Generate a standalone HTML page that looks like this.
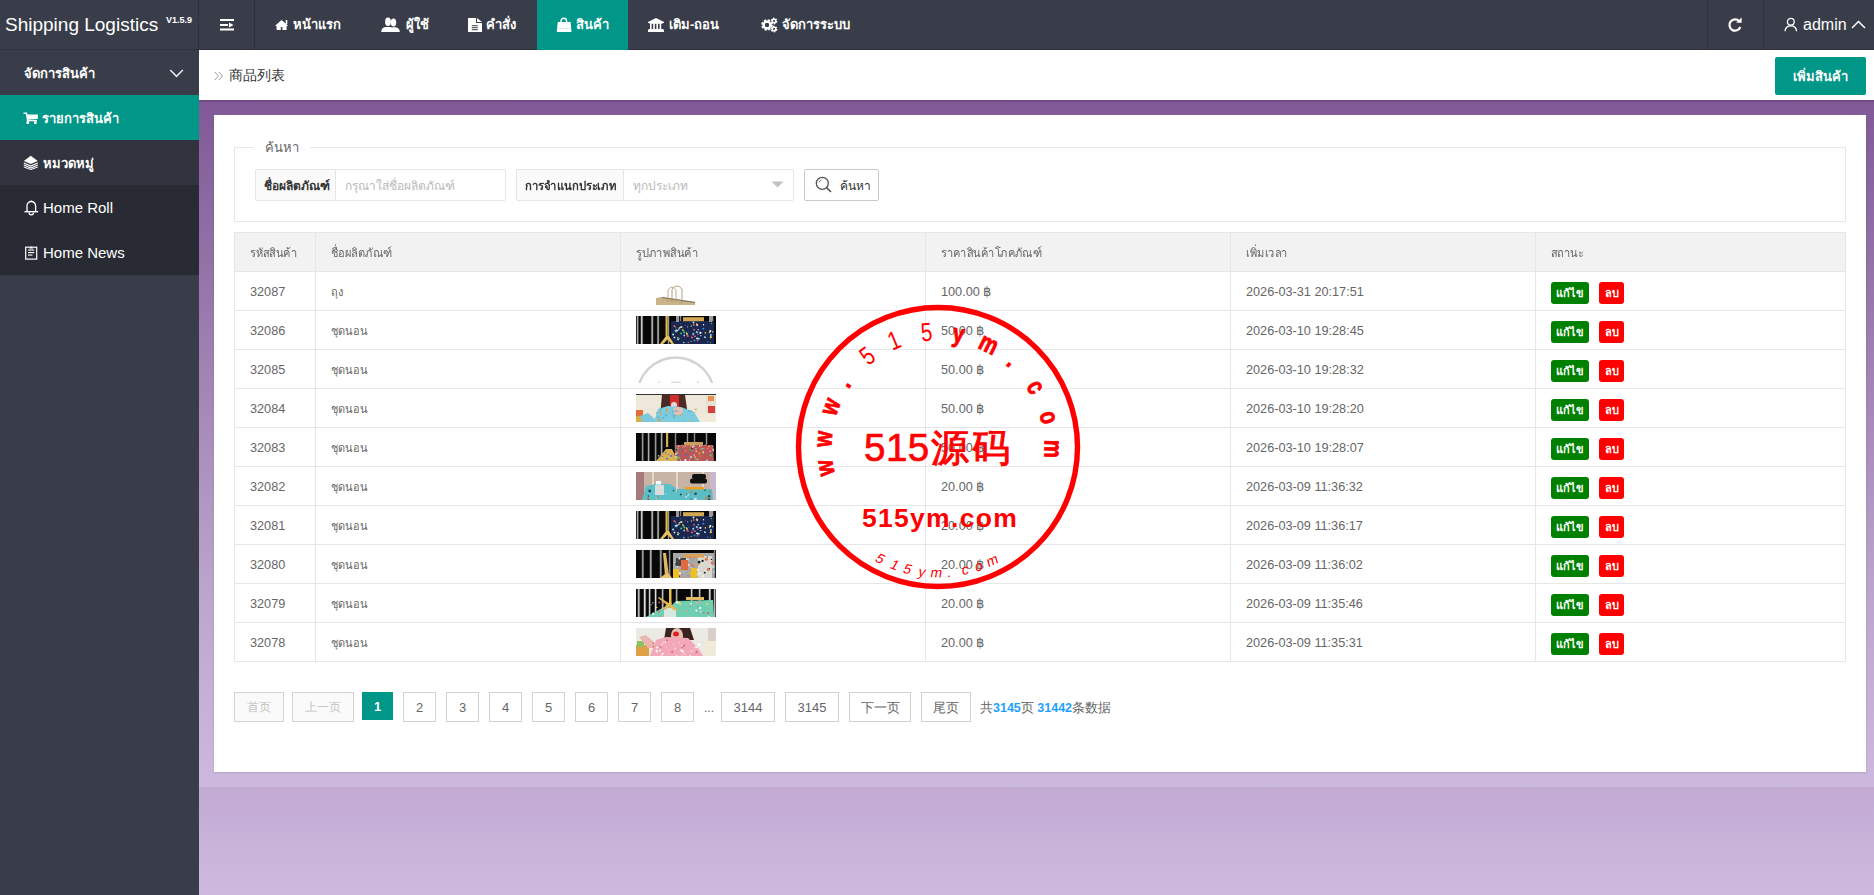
<!DOCTYPE html>
<html><head><meta charset="utf-8">
<style>
*{margin:0;padding:0;box-sizing:border-box}
html,body{width:1874px;height:895px;overflow:hidden}
body{font-family:"Liberation Sans",sans-serif;font-size:14px;color:#666;position:relative;
background:linear-gradient(180deg,#b89fca 0px,#c2aad2 787px,#cfbadf 895px)}
.abs{position:absolute}
#header{left:0;top:0;width:1874px;height:50px;background:#393D49}
#logo{left:0;top:0;width:198px;height:50px;color:#fff;white-space:nowrap}
#logo sup{font-size:10px;font-weight:bold;position:relative;top:-2px}
.vline{position:absolute;top:0;width:1px;height:50px;background:#2f323c}
.nav{position:absolute;top:0;height:50px;line-height:50px;color:#fff;font-weight:bold;font-size:13px;white-space:nowrap}
.nav svg{position:absolute}
#side{left:0;top:50px;width:199px;height:845px;background:#393D49}
.sitem{position:absolute;left:0;width:199px;height:45px;line-height:45px;color:#fff;white-space:nowrap;font-size:13px}
#crumb{left:199px;top:50px;width:1675px;height:50px;background:#fff}
#wrap{left:199px;top:100px;width:1675px;height:687px;background:linear-gradient(180deg,rgb(128,89,150) 0%,rgb(152,120,172) 29%,rgb(189,166,206) 73%,rgb(204,185,221) 100%)}
#wrap:before{content:"";position:absolute;left:0;top:0;right:0;height:3px;background:linear-gradient(180deg,rgba(60,20,70,.35),rgba(60,20,70,0))}
#card{left:214px;top:115px;width:1652px;height:657px;background:#fff;box-shadow:0 1px 2px 0 rgba(0,0,0,.12)}
table{border-collapse:collapse;table-layout:fixed;position:absolute;left:234px;top:232px;width:1612px}
td,th{border:1px solid #e6e6e6;height:39px;padding:0 15px;text-align:left;font-weight:normal;color:#666;font-size:12.7px;white-space:nowrap;line-height:20px;vertical-align:middle}
th{font-size:12px;padding-top:2px}
.sx{display:inline-block;transform:scaleX(.925);transform-origin:0 50%}
td{padding-top:2px}
.btn{position:relative;top:1px}
td.th{font-size:11px}

td.im{padding-top:0}
td.im svg{filter:blur(0.35px)}
.btn.g{background:#008000}.btn.r{background:#f00;margin-left:10px;padding:0 5px 0 6px}
th{background:#f2f2f2}
.btn{display:inline-block;height:22px;line-height:23px;padding:0 5px;color:#fff;font-size:11px;font-weight:bold;border-radius:3px;vertical-align:middle}
.pg{position:absolute;top:692px;height:30px;line-height:29px;border:1px solid #d2d2d2;text-align:center;color:#666;font-size:13px;background:#fff}
.pg.dis{background:#fafafa;color:#c2c2c2;font-size:12px}
.pg.cur{background:#009688;border-color:#009688;color:#fff;font-weight:bold;height:28px;line-height:27px}
.bl{color:#1E9FFF;font-weight:bold}
</style></head><body>
<div id="header" class="abs"></div>
<div id="logo" class="abs"><span id="lg1" style="position:absolute;left:5px;top:0;font-size:19px;line-height:50px">Shipping Logistics</span><span id="lg2" style="position:absolute;left:166px;top:0;font-size:9px;font-weight:bold;line-height:40px">V1.5.9</span></div>
<div class="abs" style="left:0;top:49px;width:1874px;height:1px;background:#30333d"></div>
<div class="vline" style="left:198px"></div>
<div class="vline" style="left:254px"></div>
<div class="vline" style="left:1707px"></div>
<div class="vline" style="left:1763px"></div>
<!-- hamburger -->
<svg class="abs" style="left:220px;top:18px" width="15" height="14" viewBox="0 0 15 14"><rect x="0" y="1" width="14" height="2" fill="#fff"/><rect x="0" y="6" width="8" height="2" fill="#fff"/><path d="M9 4.5 L13.5 7 L9 9.5Z" fill="#fff"/><rect x="0" y="10.5" width="14" height="2" fill="#fff"/></svg>
<!-- house -->
<svg class="abs" style="left:275px;top:19px" width="14" height="12" viewBox="0 0 14 12"><path d="M0.3 6.6 L6.6 1 L12.9 6.6 L12 7.3 L11.6 7 L11.6 11 L7.4 11 L7.4 8 L5.8 8 L5.8 11 L1.6 11 L1.6 7 L1.2 7.3Z" fill="#fff"/><rect x="10.7" y="1" width="1.6" height="4" fill="#fff"/></svg>
<div class="nav" style="left:293px">หน้าแรก</div>
<!-- users -->
<svg class="abs" style="left:381px;top:17px" width="20" height="16" viewBox="0 0 20 16"><ellipse cx="7" cy="4.8" rx="2.9" ry="4.3" fill="#fff"/><ellipse cx="12.5" cy="5.6" rx="2.7" ry="4" fill="#fff"/><path d="M0.2 15 Q0.4 10.5 4.5 10 L9.5 10 Q13 10.5 13.4 15Z" fill="#fff"/><path d="M11 10.3 L14.5 10.3 Q18.6 10.8 18.8 15 L12.8 15 Q12.6 12 11 10.3Z" fill="#fff"/></svg>
<div class="nav" style="left:406px">ผู้ใช้</div>
<!-- file -->
<svg class="abs" style="left:468px;top:17px" width="15" height="16" viewBox="0 0 15 16"><path d="M0 1 L8 1 L8 6 L14 6 L14 15 L0 15Z" fill="#fff"/><path d="M9 1 L14 5 L9 5Z" fill="#fff"/><rect x="3.8" y="8.2" width="6" height="1" fill="#393D49"/><rect x="3.8" y="10.2" width="6" height="1" fill="#393D49"/><rect x="3.8" y="12.2" width="6" height="1" fill="#393D49"/></svg>
<div class="nav" style="left:486px">คำสั่ง</div>
<!-- active tab -->
<div class="abs" style="left:537px;top:0;width:91px;height:50px;background:#009688"></div>
<svg class="abs" style="left:556px;top:17px" width="16" height="16" viewBox="0 0 16 16"><path d="M5 5.5 L5 4 A2.8 2.8 0 0 1 10.6 4 L10.6 5.5" stroke="#fff" stroke-width="1.4" fill="none"/><path d="M1.8 5 L14.6 5 L15.5 15 L0.7 15Z" fill="#fff"/><rect x="1" y="11.2" width="14.2" height="0.8" fill="#cfe9e6"/></svg>
<div class="nav" style="left:576px">สินค้า</div>
<!-- bank -->
<svg class="abs" style="left:648px;top:17px" width="17" height="16" viewBox="0 0 17 16"><path d="M0 5 L8 1 L16 5 L16 6 L0 6Z" fill="#fff"/><rect x="1.5" y="6" width="13" height="0.8" fill="#fff"/><rect x="2" y="6" width="1.6" height="6" fill="#fff"/><rect x="5.2" y="6" width="1.6" height="6" fill="#fff"/><rect x="8.4" y="6" width="1.6" height="6" fill="#fff"/><rect x="11.6" y="6" width="1.6" height="6" fill="#fff"/><path d="M1 12 L15 12 L16 13 L16 15 L0 15 L0 13Z" fill="#fff"/></svg>
<div class="nav" style="left:669px">เติม-ถอน</div>
<!-- gears -->
<svg class="abs" style="left:760px;top:17px" width="19" height="16" viewBox="0 0 19 16"><circle cx="7" cy="8" r="4.3" fill="none" stroke="#fff" stroke-width="3" stroke-dasharray="2 1.4"/><circle cx="7" cy="8" r="3.4" fill="none" stroke="#fff" stroke-width="2.4"/><circle cx="14" cy="4" r="2.4" fill="none" stroke="#fff" stroke-width="2" stroke-dasharray="1.3 1"/><circle cx="14" cy="4" r="1.8" fill="none" stroke="#fff" stroke-width="1.4"/><circle cx="14" cy="12" r="2.4" fill="none" stroke="#fff" stroke-width="2" stroke-dasharray="1.3 1"/><circle cx="14" cy="12" r="1.8" fill="none" stroke="#fff" stroke-width="1.4"/></svg>
<div class="nav" style="left:782px">จัดการระบบ</div>
<!-- refresh -->
<svg class="abs" style="left:1727px;top:17px" width="16" height="16" viewBox="0 0 16 16"><path d="M12.2 4.3 A5.6 5.6 0 1 0 13.3 10" stroke="#fff" stroke-width="2.2" fill="none"/><path d="M9.2 5.8 L14.6 5.8 L14.6 0.6Z" fill="#fff"/></svg>
<!-- user -->
<svg class="abs" style="left:1784px;top:17px" width="14" height="15" viewBox="0 0 14 15"><circle cx="6.8" cy="4.8" r="3.4" stroke="#fff" stroke-width="1.3" fill="none"/><path d="M1 14.2 Q1.5 8.8 6.8 8.8 Q12.1 8.8 12.6 14.2" stroke="#fff" stroke-width="1.3" fill="none"/></svg>
<div class="nav" style="left:1803px;font-weight:normal;font-size:16px">admin</div>
<svg class="abs" style="left:1851px;top:20px" width="16" height="10" viewBox="0 0 16 10"><path d="M1 8 L7.5 1.5 L14 8" stroke="#fff" stroke-width="1.5" fill="none"/></svg>


<div id="side" class="abs"></div>
<div class="sitem" style="top:50px;background:#393D49;padding-left:24px;font-weight:bold;line-height:47px">จัดการสินค้า</div>
<div class="sitem" style="top:95px;background:#009688;padding-left:42px;font-weight:bold;line-height:47px">รายการสินค้า</div>
<div class="sitem" style="top:140px;background:#31343e;padding-left:43px;font-weight:bold;line-height:47px">หมวดหมู่</div>
<div class="sitem" style="top:185px;background:#282B33;padding-left:43px;font-size:15px">Home Roll</div>
<div class="sitem" style="top:230px;background:#282B33;padding-left:43px;font-size:15px">Home News</div>

<div id="crumb" class="abs"></div>
<svg class="abs" style="left:214px;top:71px" width="10" height="10" viewBox="0 0 10 10"><path d="M0.8 1 L4.5 5 L0.8 9 M4.8 1 L8.5 5 L4.8 9" stroke="#999" stroke-width="1" fill="none"/></svg>
<div class="abs" id="crumbtxt" style="left:229px;top:50px;line-height:50px;font-size:14px;color:#333">商品列表</div>
<div class="abs" style="left:1775px;top:57px;width:91px;height:38px;background:#009688;border-radius:2px;color:#fff;font-weight:bold;font-size:13px;line-height:40px;text-align:center">เพิ่มสินค้า</div>

<div id="wrap" class="abs"></div>
<div id="card" class="abs"></div>
<div class="abs" style="left:234px;top:147px;width:1612px;height:75px;border:1px solid #e6e6e6"></div>
<div class="abs" style="left:254px;top:137px;padding:0 11px;background:#fff;line-height:22px;font-size:13px;color:#666">ค้นหา</div>
<div class="abs" style="left:255px;top:169px;width:251px;height:32px;border:1px solid #e6e6e6;border-radius:2px;background:#fff"></div>
<div class="abs" style="left:256px;top:170px;width:80px;height:30px;background:#fafafa;border-right:1px solid #e6e6e6"></div>
<div class="abs" style="left:264px;top:170px;line-height:33px;font-size:12px;font-weight:bold;color:#333">ชื่อผลิตภัณฑ์</div>
<div class="abs" style="left:345px;top:170px;line-height:33px;font-size:12px;color:#bbb">กรุณาใส่ชื่อผลิตภัณฑ์</div>
<div class="abs" style="left:516px;top:169px;width:278px;height:32px;border:1px solid #e6e6e6;border-radius:2px;background:#fff"></div>
<div class="abs" style="left:517px;top:170px;width:107px;height:30px;background:#fafafa;border-right:1px solid #e6e6e6"></div>
<div class="abs" style="left:525px;top:170px;line-height:33px;font-size:12px;font-weight:bold;color:#333;transform:scaleX(.94);transform-origin:0 50%">การจำแนกประเภท</div>
<div class="abs" style="left:633px;top:170px;line-height:33px;font-size:12px;color:#bbb">ทุกประเภท</div>
<svg class="abs" style="left:771px;top:181px" width="13" height="7" viewBox="0 0 13 7"><path d="M0.5 0.5 L12.5 0.5 L6.5 6.5Z" fill="#c2c2c2"/></svg>
<div class="abs" style="left:804px;top:169px;width:75px;height:32px;border:1px solid #c9c9c9;border-radius:2px;background:#fff"></div>
<svg class="abs" style="left:815px;top:176px" width="18" height="18" viewBox="0 0 18 18"><circle cx="7.3" cy="7.3" r="6" stroke="#555" stroke-width="1.3" fill="none"/><path d="M11.6 11.6 L16 16" stroke="#555" stroke-width="1.6"/><path d="M4 6.5 A3.5 3.5 0 0 1 6.5 4" stroke="#777" stroke-width="1" fill="none"/></svg>
<div class="abs" style="left:840px;top:170px;line-height:33px;font-size:12px;color:#333">ค้นหา</div>


<table>
<colgroup><col style="width:81px"><col style="width:305px"><col style="width:305px"><col style="width:305px"><col style="width:305px"><col style="width:310px"></colgroup>
<tr><th><span class="sx">รหัสสินค้า</span></th><th><span class="sx">ชื่อผลิตภัณฑ์</span></th><th><span class="sx">รูปภาพสินค้า</span></th><th><span class="sx">ราคาสินค้าโภคภัณฑ์</span></th><th><span class="sx">เพิ่มเวลา</span></th><th><span class="sx">สถานะ</span></th></tr>
<tr><td>32087</td><td class="th">ถุง</td><td class="im"><svg width="80" height="28" viewBox="0 0 80 28" style="display:block"><rect width="80" height="28" fill="#fff"/><path d="M20 21 L26 20 L59 25 L59 28 L20 28Z" fill="#c9b48a"/><path d="M26 20 L59 25 L59 26 L26 21Z" fill="#7d6a4c"/><path d="M32 25 L32 13 Q36 7 40 13 L40 25" stroke="#b09870" stroke-width="0.8" fill="none"/><path d="M36 25 L36 12 Q41 6 46 12 L46 26" stroke="#a08a64" stroke-width="0.8" fill="none"/></svg></td><td>100.00 ฿</td><td>2026-03-31 20:17:51</td><td class="ac"><span class="btn g">แก้ไข</span><span class="btn r">ลบ</span></td></tr>
<tr><td>32086</td><td class="th">ชุดนอน</td><td class="im"><svg width="80" height="28" viewBox="0 0 80 28" style="display:block"><rect width="80" height="28" fill="#080808"/><rect x="0.4" y="0" width="2.4" height="28" fill="#aaa" opacity="0.35"/><rect x="1" y="0" width="1.2" height="28" fill="#aaa"/><rect x="4.4" y="0" width="2.7" height="28" fill="#c8c8c8" opacity="0.35"/><rect x="5" y="0" width="1.5" height="28" fill="#c8c8c8"/><rect x="14.9" y="0" width="2.7" height="28" fill="#aaa" opacity="0.35"/><rect x="15.5" y="0" width="1.5" height="28" fill="#aaa"/><rect x="20.9" y="0" width="2.4" height="28" fill="#bbb" opacity="0.35"/><rect x="21.5" y="0" width="1.2" height="28" fill="#bbb"/><rect x="31.4" y="0" width="2.2" height="28" fill="#999" opacity="0.35"/><rect x="32" y="0" width="1" height="28" fill="#999"/><rect x="43.4" y="0" width="2.2" height="28" fill="#888" opacity="0.35"/><rect x="44" y="0" width="1" height="28" fill="#888"/><rect x="75.4" y="0" width="2.2" height="28" fill="#999" opacity="0.35"/><rect x="76" y="0" width="1" height="28" fill="#999"/><rect x="35" y="5" width="43" height="23" fill="#1a2850"/><circle cx="49.3" cy="9.2" r="0.5" fill="#e8506a"/><circle cx="58.0" cy="13.7" r="1.0" fill="#e8506a"/><circle cx="44.8" cy="7.8" r="0.5" fill="#3a7fd8"/><circle cx="39.7" cy="14.9" r="1.1" fill="#8fd0f0"/><circle cx="61.9" cy="18.2" r="0.8" fill="#e8506a"/><circle cx="52.3" cy="26.5" r="0.8" fill="#e8506a"/><circle cx="41.5" cy="14.8" r="0.8" fill="#8fd0f0"/><circle cx="59.0" cy="20.3" r="0.8" fill="#8fd0f0"/><circle cx="62.2" cy="13.8" r="0.8" fill="#8fd0f0"/><circle cx="61.4" cy="16.4" r="1.0" fill="#3a7fd8"/><circle cx="55.1" cy="25.4" r="0.7" fill="#60d060"/><circle cx="68.6" cy="20.7" r="0.5" fill="#fff"/><circle cx="48.3" cy="16.4" r="0.9" fill="#60d060"/><circle cx="47.8" cy="26.6" r="0.8" fill="#8fd0f0"/><circle cx="42.8" cy="13.2" r="0.8" fill="#c0e0f0"/><circle cx="75.4" cy="7.6" r="0.7" fill="#60d060"/><circle cx="50.4" cy="16.4" r="0.5" fill="#c0e0f0"/><circle cx="39.8" cy="11.7" r="0.5" fill="#8fd0f0"/><circle cx="64.8" cy="19.6" r="0.7" fill="#c0e0f0"/><circle cx="51.8" cy="20.0" r="1.1" fill="#e8506a"/><circle cx="50.6" cy="18.8" r="0.5" fill="#c0e0f0"/><circle cx="67.5" cy="8.7" r="0.7" fill="#fff"/><circle cx="73.6" cy="16.4" r="0.8" fill="#f0d040"/><circle cx="58.5" cy="24.6" r="1.0" fill="#3a7fd8"/><circle cx="47.4" cy="14.7" r="0.9" fill="#60d060"/><circle cx="51.6" cy="10.8" r="0.6" fill="#8fd0f0"/><circle cx="45.5" cy="10.9" r="1.0" fill="#c0e0f0"/><circle cx="43.5" cy="11.9" r="0.8" fill="#f0d040"/><circle cx="51.1" cy="17.9" r="0.9" fill="#f0d040"/><circle cx="57.1" cy="19.0" r="0.8" fill="#e8506a"/><circle cx="71.7" cy="26.0" r="0.7" fill="#3a7fd8"/><circle cx="52.2" cy="16.1" r="0.5" fill="#3a7fd8"/><circle cx="38.8" cy="10.4" r="0.6" fill="#f0d040"/><circle cx="60.6" cy="8.1" r="0.8" fill="#f0d040"/><circle cx="74.9" cy="18.9" r="1.0" fill="#8fd0f0"/><circle cx="61.2" cy="9.1" r="1.1" fill="#e8c8b0"/><circle cx="60.7" cy="16.0" r="1.0" fill="#8fd0f0"/><circle cx="76.7" cy="15.8" r="0.7" fill="#c0e0f0"/><circle cx="41.9" cy="21.7" r="0.8" fill="#e8c8b0"/><circle cx="64.4" cy="16.8" r="1.1" fill="#fff"/><circle cx="57.7" cy="9.1" r="1.0" fill="#e8506a"/><circle cx="48.2" cy="19.5" r="0.9" fill="#8fd0f0"/><circle cx="46.7" cy="13.7" r="0.7" fill="#f0d040"/><circle cx="45.1" cy="17.4" r="0.9" fill="#60d060"/><circle cx="61.1" cy="22.6" r="1.0" fill="#fff"/><circle cx="69.6" cy="21.5" r="0.6" fill="#fff"/><circle cx="56.2" cy="21.4" r="1.0" fill="#e8506a"/><circle cx="55.4" cy="10.1" r="0.8" fill="#60d060"/><circle cx="74.4" cy="26.7" r="0.5" fill="#60d060"/><circle cx="40.2" cy="15.9" r="0.6" fill="#60d060"/><circle cx="61.6" cy="24.9" r="0.8" fill="#e8506a"/><circle cx="62.8" cy="22.8" r="1.0" fill="#8fd0f0"/><circle cx="40.9" cy="14.2" r="0.8" fill="#fff"/><circle cx="43.3" cy="22.6" r="0.6" fill="#60d060"/><circle cx="74.8" cy="21.2" r="0.7" fill="#c0e0f0"/><circle cx="74.8" cy="21.2" r="1.1" fill="#f0d040"/><circle cx="37.1" cy="18.4" r="1.0" fill="#c0e0f0"/><circle cx="42.0" cy="23.4" r="0.9" fill="#c0e0f0"/><circle cx="50.4" cy="17.5" r="0.5" fill="#f0d040"/><circle cx="68.8" cy="21.3" r="0.8" fill="#8fd0f0"/><circle cx="74.3" cy="15.1" r="1.0" fill="#fff"/><circle cx="44.7" cy="11.3" r="0.8" fill="#e8c8b0"/><circle cx="67.3" cy="12.8" r="1.0" fill="#3a7fd8"/><circle cx="38.5" cy="21.5" r="0.9" fill="#c0e0f0"/><circle cx="69.4" cy="16.9" r="0.8" fill="#f0d040"/><circle cx="57.5" cy="6.4" r="1.0" fill="#c0e0f0"/><circle cx="61.0" cy="22.3" r="0.6" fill="#f0d040"/><circle cx="55.4" cy="21.2" r="0.7" fill="#e8506a"/><circle cx="57.3" cy="17.7" r="1.0" fill="#8fd0f0"/><circle cx="38.3" cy="10.0" r="1.0" fill="#e8506a"/><rect x="47" y="1.2" width="21" height="4" fill="#d4a852"/><rect x="40" y="0" width="3" height="6" fill="#999"/><rect x="73" y="0" width="3" height="6" fill="#999"/><rect x="29.5" y="0" width="2.2" height="20" fill="#e0b850"/><path d="M24 28 L30 20 L33 20 L38 28 L35.5 28 L31.5 23.5 L27 28Z" fill="#e8c060"/></svg></td><td>50.00 ฿</td><td>2026-03-10 19:28:45</td><td class="ac"><span class="btn g">แก้ไข</span><span class="btn r">ลบ</span></td></tr>
<tr><td>32085</td><td class="th">ชุดนอน</td><td class="im"><svg width="80" height="28" viewBox="0 0 80 28" style="display:block"><rect width="80" height="28" fill="#fff"/><circle cx="39.8" cy="40.8" r="38.3" stroke="#d6d2d4" stroke-width="2.4" fill="none"/><rect x="35" y="26.5" width="10" height="1.5" rx="0.7" fill="#ddd"/><rect x="22" y="26.5" width="2" height="1.5" fill="#ddd"/><rect x="61" y="26.5" width="2" height="1.5" fill="#ddd"/></svg></td><td>50.00 ฿</td><td>2026-03-10 19:28:32</td><td class="ac"><span class="btn g">แก้ไข</span><span class="btn r">ลบ</span></td></tr>
<tr><td>32084</td><td class="th">ชุดนอน</td><td class="im"><svg width="80" height="28" viewBox="0 0 80 28" style="display:block"><rect width="80" height="28" fill="#eee8da"/><rect width="80" height="1" fill="#333"/><rect x="0" y="16" width="7" height="8" fill="#e0703a"/><rect x="0" y="22" width="8" height="6" fill="#d8b040"/><path d="M26 1 L49 1 L52 22 L24 22Z" fill="#4a2a22"/><rect x="34" y="1" width="9" height="17" rx="1" fill="#d42b2b"/><circle cx="38" cy="11" r="3" fill="#ddd"/><path d="M18 28 L22 15 L32 12 L45 13 L58 18 L64 28Z" fill="#7ccde0"/><path d="M4 22 L12 19 L20 26 L18 28 L6 28Z" fill="#7cc8dc"/><ellipse cx="42" cy="17" rx="5" ry="4" fill="#e8c0b0"/><circle cx="40.3" cy="21.7" r="0.8" fill="#d8a050"/><circle cx="44.5" cy="21.1" r="0.9" fill="#d8a050"/><circle cx="38.1" cy="21.4" r="0.8" fill="#5ab0d0"/><circle cx="29.9" cy="21.3" r="1.1" fill="#5ab0d0"/><circle cx="55.7" cy="17.4" r="0.6" fill="#5ab0d0"/><circle cx="24.9" cy="20.3" r="0.9" fill="#d8a050"/><circle cx="37.1" cy="17.6" r="1.0" fill="#5ab0d0"/><circle cx="55.9" cy="16.9" r="0.6" fill="#5ab0d0"/><circle cx="55.3" cy="26.6" r="0.9" fill="#d8a050"/><circle cx="23.8" cy="25.6" r="1.1" fill="#d8a050"/><circle cx="53.3" cy="16.9" r="1.1" fill="#5ab0d0"/><circle cx="36.2" cy="20.1" r="0.7" fill="#5ab0d0"/><circle cx="48.9" cy="15.2" r="0.8" fill="#5ab0d0"/><circle cx="20.7" cy="19.0" r="0.8" fill="#5ab0d0"/><circle cx="22.6" cy="26.8" r="1.1" fill="#d8a050"/><circle cx="24.2" cy="18.2" r="1.0" fill="#d8a050"/><circle cx="27.3" cy="24.1" r="1.0" fill="#5ab0d0"/><circle cx="47.0" cy="26.4" r="0.6" fill="#5ab0d0"/><circle cx="56.8" cy="21.8" r="0.6" fill="#5ab0d0"/><circle cx="22.3" cy="23.3" r="1.0" fill="#5ab0d0"/><circle cx="30.8" cy="15.2" r="1.0" fill="#d8a050"/><circle cx="23.3" cy="25.3" r="0.7" fill="#d8a050"/><circle cx="24.9" cy="15.1" r="1.1" fill="#5ab0d0"/><circle cx="30.7" cy="16.6" r="1.1" fill="#d8a050"/><circle cx="58.8" cy="18.1" r="0.6" fill="#d8a050"/><circle cx="32.5" cy="18.7" r="0.7" fill="#d8a050"/><circle cx="40.0" cy="17.1" r="1.0" fill="#5ab0d0"/><circle cx="59.8" cy="15.4" r="0.9" fill="#d8a050"/><circle cx="42.0" cy="17.3" r="0.6" fill="#5ab0d0"/><circle cx="37.9" cy="22.9" r="0.9" fill="#5ab0d0"/><rect x="70" y="1" width="10" height="20" fill="#e8e0d0"/><rect x="72" y="2" width="6" height="5" fill="#e89050"/><rect x="72" y="12" width="7" height="8" fill="#d84040"/><rect x="64" y="19" width="16" height="9" fill="#f0ead8"/></svg></td><td>50.00 ฿</td><td>2026-03-10 19:28:20</td><td class="ac"><span class="btn g">แก้ไข</span><span class="btn r">ลบ</span></td></tr>
<tr><td>32083</td><td class="th">ชุดนอน</td><td class="im"><svg width="80" height="28" viewBox="0 0 80 28" style="display:block"><rect width="80" height="28" fill="#080808"/><rect x="5.4" y="0" width="2.4" height="28" fill="#999" opacity="0.35"/><rect x="6" y="0" width="1.2" height="28" fill="#999"/><rect x="11.4" y="0" width="2.4" height="28" fill="#aaa" opacity="0.35"/><rect x="12" y="0" width="1.2" height="28" fill="#aaa"/><rect x="18.4" y="0" width="2.4" height="28" fill="#999" opacity="0.35"/><rect x="19" y="0" width="1.2" height="28" fill="#999"/><rect x="24.4" y="0" width="2.4" height="28" fill="#aaa" opacity="0.35"/><rect x="25" y="0" width="1.2" height="28" fill="#aaa"/><rect x="38.4" y="0" width="2.2" height="28" fill="#888" opacity="0.35"/><rect x="39" y="0" width="1" height="28" fill="#888"/><rect x="50.4" y="0" width="2.2" height="28" fill="#999" opacity="0.35"/><rect x="51" y="0" width="1" height="28" fill="#999"/><rect x="57.4" y="0" width="2.2" height="28" fill="#888" opacity="0.35"/><rect x="58" y="0" width="1" height="28" fill="#888"/><rect x="69.4" y="0" width="2.2" height="28" fill="#999" opacity="0.35"/><rect x="70" y="0" width="1" height="28" fill="#999"/><path d="M40 12 L77 12 L78 28 L38 28Z" fill="#b85858"/><circle cx="59.8" cy="26.2" r="0.9" fill="#60c060"/><circle cx="77.3" cy="17.5" r="0.7" fill="#f0c0a0"/><circle cx="51.9" cy="12.9" r="0.5" fill="#f0c0a0"/><circle cx="63.0" cy="26.1" r="0.6" fill="#f0a030"/><circle cx="41.4" cy="25.5" r="0.9" fill="#60c060"/><circle cx="65.7" cy="12.7" r="0.6" fill="#f0c0a0"/><circle cx="55.8" cy="16.2" r="1.1" fill="#222"/><circle cx="59.9" cy="15.9" r="0.6" fill="#60c060"/><circle cx="45.3" cy="17.4" r="0.8" fill="#3a70d0"/><circle cx="58.1" cy="15.2" r="0.6" fill="#e04040"/><circle cx="70.7" cy="14.3" r="0.7" fill="#e04040"/><circle cx="50.0" cy="22.1" r="0.9" fill="#3a70d0"/><circle cx="59.2" cy="24.0" r="1.0" fill="#f0a030"/><circle cx="66.8" cy="19.9" r="0.9" fill="#60c060"/><circle cx="63.7" cy="12.7" r="0.9" fill="#f0a030"/><circle cx="70.5" cy="14.2" r="1.0" fill="#e04040"/><circle cx="61.4" cy="26.3" r="0.6" fill="#fff"/><circle cx="39.7" cy="22.2" r="0.7" fill="#3a70d0"/><circle cx="56.1" cy="12.8" r="0.9" fill="#e04040"/><circle cx="65.2" cy="19.8" r="0.8" fill="#e04040"/><circle cx="40.8" cy="26.9" r="0.9" fill="#3a70d0"/><circle cx="40.6" cy="23.8" r="1.0" fill="#60c060"/><circle cx="71.8" cy="15.8" r="0.6" fill="#fff"/><circle cx="64.0" cy="19.4" r="0.5" fill="#f0a030"/><circle cx="74.4" cy="16.6" r="0.9" fill="#e04040"/><circle cx="63.7" cy="13.2" r="0.7" fill="#f0c0a0"/><circle cx="64.1" cy="23.1" r="0.5" fill="#f0c0a0"/><circle cx="40.4" cy="16.3" r="0.9" fill="#3a70d0"/><circle cx="65.0" cy="16.7" r="0.8" fill="#60c060"/><circle cx="56.7" cy="13.9" r="0.7" fill="#fff"/><circle cx="41.4" cy="19.6" r="0.8" fill="#60c060"/><circle cx="70.8" cy="27.5" r="1.1" fill="#aad0f0"/><circle cx="53.5" cy="26.7" r="0.5" fill="#fff"/><circle cx="41.6" cy="24.0" r="1.1" fill="#60c060"/><circle cx="43.3" cy="25.1" r="1.0" fill="#60c060"/><circle cx="66.1" cy="15.7" r="0.7" fill="#aad0f0"/><circle cx="44.4" cy="27.2" r="0.7" fill="#aad0f0"/><circle cx="67.1" cy="18.7" r="0.7" fill="#f0a030"/><circle cx="71.6" cy="12.0" r="1.0" fill="#222"/><circle cx="42.8" cy="26.8" r="1.0" fill="#e04040"/><circle cx="49.6" cy="18.0" r="0.7" fill="#f0a030"/><circle cx="72.8" cy="13.2" r="1.0" fill="#f0a030"/><circle cx="72.2" cy="16.5" r="1.0" fill="#e04040"/><circle cx="49.4" cy="27.0" r="1.1" fill="#fff"/><circle cx="55.4" cy="17.0" r="1.0" fill="#222"/><circle cx="55.1" cy="12.5" r="1.0" fill="#f0a030"/><circle cx="75.6" cy="20.8" r="0.5" fill="#3a70d0"/><circle cx="67.3" cy="19.2" r="0.9" fill="#f0c0a0"/><circle cx="49.4" cy="12.8" r="0.6" fill="#f0c0a0"/><circle cx="54.6" cy="16.5" r="0.9" fill="#60c060"/><circle cx="77.1" cy="16.2" r="0.7" fill="#fff"/><circle cx="60.3" cy="18.3" r="0.9" fill="#f0c0a0"/><circle cx="41.0" cy="20.0" r="0.8" fill="#aad0f0"/><circle cx="56.1" cy="17.3" r="0.8" fill="#aad0f0"/><circle cx="59.9" cy="15.9" r="0.7" fill="#f0c0a0"/><circle cx="41.6" cy="15.8" r="1.0" fill="#60c060"/><circle cx="46.1" cy="12.3" r="0.7" fill="#f0a030"/><circle cx="67.8" cy="15.4" r="0.7" fill="#60c060"/><circle cx="40.5" cy="16.4" r="0.6" fill="#222"/><circle cx="58.1" cy="22.1" r="0.6" fill="#fff"/><circle cx="73.9" cy="18.2" r="0.8" fill="#aad0f0"/><circle cx="50.5" cy="25.0" r="0.6" fill="#e04040"/><circle cx="55.0" cy="24.2" r="1.1" fill="#aad0f0"/><circle cx="57.6" cy="13.2" r="1.1" fill="#aad0f0"/><circle cx="47.9" cy="13.7" r="0.6" fill="#f0c0a0"/><circle cx="76.9" cy="13.7" r="0.6" fill="#aad0f0"/><circle cx="69.1" cy="12.0" r="0.6" fill="#f0c0a0"/><circle cx="74.8" cy="22.3" r="1.1" fill="#60c060"/><circle cx="63.1" cy="20.5" r="0.9" fill="#f0a030"/><circle cx="42.5" cy="13.1" r="0.7" fill="#fff"/><rect x="48" y="9" width="19" height="3" fill="#c8a060"/><rect x="30" y="0" width="2.2" height="14" fill="#d8b050"/><path d="M20 28 L30 16 L36 16 L42 28Z" fill="#d8b050"/><circle cx="26.5" cy="24.8" r="0.8" fill="#f0c0a0"/><circle cx="41.9" cy="22.2" r="0.9" fill="#3a70d0"/><circle cx="39.7" cy="23.8" r="0.8" fill="#e04040"/><circle cx="22.6" cy="23.3" r="0.5" fill="#3a70d0"/><circle cx="25.9" cy="27.1" r="0.5" fill="#ddd"/><circle cx="26.6" cy="23.4" r="0.6" fill="#3a70d0"/><circle cx="22.7" cy="22.7" r="0.7" fill="#ddd"/><circle cx="29.9" cy="20.1" r="0.9" fill="#3a70d0"/><circle cx="32.1" cy="21.6" r="0.7" fill="#e04040"/><circle cx="38.4" cy="21.8" r="0.7" fill="#e04040"/><circle cx="39.8" cy="20.9" r="0.9" fill="#ddd"/><circle cx="39.9" cy="23.9" r="1.1" fill="#f0c0a0"/><circle cx="24.9" cy="23.1" r="0.5" fill="#e04040"/><circle cx="33.9" cy="23.3" r="0.6" fill="#f0c0a0"/><circle cx="31.0" cy="25.7" r="0.9" fill="#3a70d0"/><circle cx="42.0" cy="27.5" r="0.6" fill="#3a70d0"/><circle cx="35.0" cy="24.2" r="0.5" fill="#ddd"/><circle cx="35.3" cy="23.0" r="1.1" fill="#3a70d0"/><circle cx="30.8" cy="20.9" r="0.7" fill="#f0c0a0"/><circle cx="29.0" cy="27.6" r="0.8" fill="#f0c0a0"/></svg></td><td>50.00 ฿</td><td>2026-03-10 19:28:07</td><td class="ac"><span class="btn g">แก้ไข</span><span class="btn r">ลบ</span></td></tr>
<tr><td>32082</td><td class="th">ชุดนอน</td><td class="im"><svg width="80" height="28" viewBox="0 0 80 28" style="display:block"><rect width="80" height="28" fill="#c7b4a6"/><rect x="0" y="0" width="8" height="28" fill="#a6797b"/><rect x="74" y="0" width="6" height="28" fill="#c8b8cc"/><rect x="16" y="0" width="2" height="28" fill="#e0d8c8"/><rect x="40" y="0" width="2" height="28" fill="#e0d8c8"/><rect x="66" y="0" width="2" height="28" fill="#e0d8c8"/><path d="M6 28 L10 14 L20 12 L34 12 L40 16 L42 28Z" fill="#5cc0c8"/><rect x="19" y="13" width="9" height="10" fill="#d8dcdc"/><rect x="20" y="9" width="5" height="3.5" fill="#fff"/><path d="M41 17 L76 17 L77 28 L41 28Z" fill="#5cbdc6"/><circle cx="59.6" cy="21.8" r="1.3" fill="#304040"/><circle cx="37.4" cy="18.5" r="0.8" fill="#304040"/><circle cx="44.8" cy="22.5" r="0.9" fill="#304040"/><circle cx="69.0" cy="18.3" r="0.8" fill="#304040"/><circle cx="50.5" cy="22.0" r="0.6" fill="#304040"/><circle cx="12.3" cy="27.2" r="0.8" fill="#304040"/><circle cx="12.3" cy="24.1" r="0.8" fill="#304040"/><circle cx="73.1" cy="24.2" r="1.2" fill="#304040"/><circle cx="54.9" cy="27.2" r="0.6" fill="#304040"/><circle cx="59.4" cy="27.2" r="1.4" fill="#e0e0e0"/><circle cx="12.4" cy="26.3" r="1.0" fill="#c08030"/><circle cx="73.1" cy="27.5" r="1.2" fill="#304040"/><circle cx="70.1" cy="26.1" r="1.3" fill="#c08030"/><circle cx="20.4" cy="26.0" r="0.8" fill="#e0e0e0"/><circle cx="55.1" cy="19.5" r="0.9" fill="#c08030"/><circle cx="29.7" cy="21.6" r="0.7" fill="#e0e0e0"/><circle cx="21.4" cy="25.5" r="0.9" fill="#c08030"/><circle cx="52.2" cy="22.8" r="0.9" fill="#e0e0e0"/><circle cx="74.7" cy="26.8" r="0.8" fill="#c08030"/><circle cx="13.7" cy="19.0" r="1.4" fill="#304040"/><circle cx="74.1" cy="19.7" r="0.9" fill="#c08030"/><circle cx="50.2" cy="24.7" r="1.0" fill="#e0e0e0"/><rect x="49" y="15" width="19" height="2.5" fill="#f0a020"/><rect x="56" y="2" width="14" height="5" rx="2" fill="#111"/><rect x="54" y="6.5" width="17" height="5" rx="2" fill="#111"/></svg></td><td>20.00 ฿</td><td>2026-03-09 11:36:32</td><td class="ac"><span class="btn g">แก้ไข</span><span class="btn r">ลบ</span></td></tr>
<tr><td>32081</td><td class="th">ชุดนอน</td><td class="im"><svg width="80" height="28" viewBox="0 0 80 28" style="display:block"><rect width="80" height="28" fill="#080808"/><rect x="0.4" y="0" width="2.4" height="28" fill="#aaa" opacity="0.35"/><rect x="1" y="0" width="1.2" height="28" fill="#aaa"/><rect x="4.4" y="0" width="2.7" height="28" fill="#c8c8c8" opacity="0.35"/><rect x="5" y="0" width="1.5" height="28" fill="#c8c8c8"/><rect x="14.9" y="0" width="2.7" height="28" fill="#aaa" opacity="0.35"/><rect x="15.5" y="0" width="1.5" height="28" fill="#aaa"/><rect x="20.9" y="0" width="2.4" height="28" fill="#bbb" opacity="0.35"/><rect x="21.5" y="0" width="1.2" height="28" fill="#bbb"/><rect x="31.4" y="0" width="2.2" height="28" fill="#999" opacity="0.35"/><rect x="32" y="0" width="1" height="28" fill="#999"/><rect x="43.4" y="0" width="2.2" height="28" fill="#888" opacity="0.35"/><rect x="44" y="0" width="1" height="28" fill="#888"/><rect x="75.4" y="0" width="2.2" height="28" fill="#999" opacity="0.35"/><rect x="76" y="0" width="1" height="28" fill="#999"/><rect x="35" y="5" width="43" height="23" fill="#1a2850"/><circle cx="49.3" cy="9.2" r="0.5" fill="#e8506a"/><circle cx="58.0" cy="13.7" r="1.0" fill="#e8506a"/><circle cx="44.8" cy="7.8" r="0.5" fill="#3a7fd8"/><circle cx="39.7" cy="14.9" r="1.1" fill="#8fd0f0"/><circle cx="61.9" cy="18.2" r="0.8" fill="#e8506a"/><circle cx="52.3" cy="26.5" r="0.8" fill="#e8506a"/><circle cx="41.5" cy="14.8" r="0.8" fill="#8fd0f0"/><circle cx="59.0" cy="20.3" r="0.8" fill="#8fd0f0"/><circle cx="62.2" cy="13.8" r="0.8" fill="#8fd0f0"/><circle cx="61.4" cy="16.4" r="1.0" fill="#3a7fd8"/><circle cx="55.1" cy="25.4" r="0.7" fill="#60d060"/><circle cx="68.6" cy="20.7" r="0.5" fill="#fff"/><circle cx="48.3" cy="16.4" r="0.9" fill="#60d060"/><circle cx="47.8" cy="26.6" r="0.8" fill="#8fd0f0"/><circle cx="42.8" cy="13.2" r="0.8" fill="#c0e0f0"/><circle cx="75.4" cy="7.6" r="0.7" fill="#60d060"/><circle cx="50.4" cy="16.4" r="0.5" fill="#c0e0f0"/><circle cx="39.8" cy="11.7" r="0.5" fill="#8fd0f0"/><circle cx="64.8" cy="19.6" r="0.7" fill="#c0e0f0"/><circle cx="51.8" cy="20.0" r="1.1" fill="#e8506a"/><circle cx="50.6" cy="18.8" r="0.5" fill="#c0e0f0"/><circle cx="67.5" cy="8.7" r="0.7" fill="#fff"/><circle cx="73.6" cy="16.4" r="0.8" fill="#f0d040"/><circle cx="58.5" cy="24.6" r="1.0" fill="#3a7fd8"/><circle cx="47.4" cy="14.7" r="0.9" fill="#60d060"/><circle cx="51.6" cy="10.8" r="0.6" fill="#8fd0f0"/><circle cx="45.5" cy="10.9" r="1.0" fill="#c0e0f0"/><circle cx="43.5" cy="11.9" r="0.8" fill="#f0d040"/><circle cx="51.1" cy="17.9" r="0.9" fill="#f0d040"/><circle cx="57.1" cy="19.0" r="0.8" fill="#e8506a"/><circle cx="71.7" cy="26.0" r="0.7" fill="#3a7fd8"/><circle cx="52.2" cy="16.1" r="0.5" fill="#3a7fd8"/><circle cx="38.8" cy="10.4" r="0.6" fill="#f0d040"/><circle cx="60.6" cy="8.1" r="0.8" fill="#f0d040"/><circle cx="74.9" cy="18.9" r="1.0" fill="#8fd0f0"/><circle cx="61.2" cy="9.1" r="1.1" fill="#e8c8b0"/><circle cx="60.7" cy="16.0" r="1.0" fill="#8fd0f0"/><circle cx="76.7" cy="15.8" r="0.7" fill="#c0e0f0"/><circle cx="41.9" cy="21.7" r="0.8" fill="#e8c8b0"/><circle cx="64.4" cy="16.8" r="1.1" fill="#fff"/><circle cx="57.7" cy="9.1" r="1.0" fill="#e8506a"/><circle cx="48.2" cy="19.5" r="0.9" fill="#8fd0f0"/><circle cx="46.7" cy="13.7" r="0.7" fill="#f0d040"/><circle cx="45.1" cy="17.4" r="0.9" fill="#60d060"/><circle cx="61.1" cy="22.6" r="1.0" fill="#fff"/><circle cx="69.6" cy="21.5" r="0.6" fill="#fff"/><circle cx="56.2" cy="21.4" r="1.0" fill="#e8506a"/><circle cx="55.4" cy="10.1" r="0.8" fill="#60d060"/><circle cx="74.4" cy="26.7" r="0.5" fill="#60d060"/><circle cx="40.2" cy="15.9" r="0.6" fill="#60d060"/><circle cx="61.6" cy="24.9" r="0.8" fill="#e8506a"/><circle cx="62.8" cy="22.8" r="1.0" fill="#8fd0f0"/><circle cx="40.9" cy="14.2" r="0.8" fill="#fff"/><circle cx="43.3" cy="22.6" r="0.6" fill="#60d060"/><circle cx="74.8" cy="21.2" r="0.7" fill="#c0e0f0"/><circle cx="74.8" cy="21.2" r="1.1" fill="#f0d040"/><circle cx="37.1" cy="18.4" r="1.0" fill="#c0e0f0"/><circle cx="42.0" cy="23.4" r="0.9" fill="#c0e0f0"/><circle cx="50.4" cy="17.5" r="0.5" fill="#f0d040"/><circle cx="68.8" cy="21.3" r="0.8" fill="#8fd0f0"/><circle cx="74.3" cy="15.1" r="1.0" fill="#fff"/><circle cx="44.7" cy="11.3" r="0.8" fill="#e8c8b0"/><circle cx="67.3" cy="12.8" r="1.0" fill="#3a7fd8"/><circle cx="38.5" cy="21.5" r="0.9" fill="#c0e0f0"/><circle cx="69.4" cy="16.9" r="0.8" fill="#f0d040"/><circle cx="57.5" cy="6.4" r="1.0" fill="#c0e0f0"/><circle cx="61.0" cy="22.3" r="0.6" fill="#f0d040"/><circle cx="55.4" cy="21.2" r="0.7" fill="#e8506a"/><circle cx="57.3" cy="17.7" r="1.0" fill="#8fd0f0"/><circle cx="38.3" cy="10.0" r="1.0" fill="#e8506a"/><rect x="47" y="1.2" width="21" height="4" fill="#d4a852"/><rect x="40" y="0" width="3" height="6" fill="#999"/><rect x="73" y="0" width="3" height="6" fill="#999"/><rect x="29.5" y="0" width="2.2" height="20" fill="#e0b850"/><path d="M24 28 L30 20 L33 20 L38 28 L35.5 28 L31.5 23.5 L27 28Z" fill="#e8c060"/></svg></td><td>20.00 ฿</td><td>2026-03-09 11:36:17</td><td class="ac"><span class="btn g">แก้ไข</span><span class="btn r">ลบ</span></td></tr>
<tr><td>32080</td><td class="th">ชุดนอน</td><td class="im"><svg width="80" height="28" viewBox="0 0 80 28" style="display:block"><rect width="80" height="28" fill="#080808"/><rect x="5.4" y="0" width="2.7" height="28" fill="#999" opacity="0.35"/><rect x="6" y="0" width="1.5" height="28" fill="#999"/><rect x="13.4" y="0" width="2.7" height="28" fill="#aaa" opacity="0.35"/><rect x="14" y="0" width="1.5" height="28" fill="#aaa"/><rect x="23.4" y="0" width="2.7" height="28" fill="#999" opacity="0.35"/><rect x="24" y="0" width="1.5" height="28" fill="#999"/><rect x="32.4" y="0" width="2.4" height="28" fill="#888" opacity="0.35"/><rect x="33" y="0" width="1.2" height="28" fill="#888"/><rect x="77.4" y="0" width="2.2" height="28" fill="#888" opacity="0.35"/><rect x="78" y="0" width="1" height="28" fill="#888"/><rect x="37" y="3" width="41" height="25" fill="#a8a8a8"/><rect x="62" y="6" width="14" height="22" fill="#d8d8d0"/><rect x="40" y="8" width="10" height="8" fill="#444"/><circle cx="68.7" cy="22.7" r="0.9" fill="#111"/><circle cx="60.2" cy="14.2" r="0.8" fill="#f0c020"/><circle cx="55.0" cy="10.1" r="0.7" fill="#ddd"/><circle cx="73.3" cy="18.7" r="0.7" fill="#111"/><circle cx="47.3" cy="11.4" r="0.8" fill="#e86a40"/><circle cx="70.1" cy="20.4" r="0.7" fill="#eee"/><circle cx="56.5" cy="24.0" r="1.4" fill="#999"/><circle cx="38.7" cy="12.5" r="0.6" fill="#eee"/><circle cx="61.6" cy="24.2" r="1.4" fill="#ddd"/><circle cx="52.3" cy="25.1" r="1.1" fill="#999"/><circle cx="68.8" cy="20.6" r="0.7" fill="#eee"/><circle cx="61.4" cy="19.6" r="0.6" fill="#ddd"/><circle cx="50.9" cy="7.0" r="0.6" fill="#111"/><circle cx="67.0" cy="26.1" r="1.3" fill="#eee"/><circle cx="53.8" cy="14.2" r="0.9" fill="#e86a40"/><circle cx="45.3" cy="23.5" r="1.0" fill="#e86a40"/><circle cx="53.7" cy="23.5" r="1.1" fill="#f0c020"/><circle cx="63.2" cy="8.0" r="1.0" fill="#ddd"/><circle cx="48.1" cy="27.7" r="0.9" fill="#f0c020"/><circle cx="76.1" cy="12.9" r="1.4" fill="#e86a40"/><circle cx="54.0" cy="6.4" r="1.2" fill="#111"/><circle cx="53.0" cy="14.9" r="1.0" fill="#eee"/><circle cx="43.4" cy="8.5" r="1.0" fill="#eee"/><circle cx="73.2" cy="16.1" r="0.7" fill="#ddd"/><circle cx="39.1" cy="9.1" r="0.7" fill="#999"/><circle cx="62.5" cy="14.2" r="0.8" fill="#e86a40"/><circle cx="51.3" cy="9.6" r="1.4" fill="#ddd"/><circle cx="41.5" cy="16.8" r="0.9" fill="#ddd"/><circle cx="71.3" cy="7.0" r="0.9" fill="#999"/><circle cx="61.9" cy="20.0" r="1.4" fill="#eee"/><circle cx="62.4" cy="24.1" r="1.2" fill="#ddd"/><circle cx="72.1" cy="19.7" r="1.4" fill="#e86a40"/><circle cx="71.0" cy="10.0" r="0.6" fill="#ddd"/><circle cx="75.5" cy="9.4" r="0.7" fill="#111"/><circle cx="47.1" cy="21.9" r="0.6" fill="#ddd"/><circle cx="60.1" cy="22.7" r="1.2" fill="#eee"/><circle cx="50.3" cy="14.6" r="1.1" fill="#999"/><circle cx="62.7" cy="12.7" r="0.9" fill="#999"/><circle cx="47.2" cy="14.6" r="1.0" fill="#111"/><circle cx="55.0" cy="6.5" r="1.5" fill="#e86a40"/><circle cx="56.1" cy="15.8" r="1.3" fill="#e86a40"/><circle cx="55.8" cy="10.0" r="1.0" fill="#999"/><circle cx="39.8" cy="13.9" r="0.7" fill="#111"/><circle cx="55.1" cy="17.2" r="0.6" fill="#eee"/><circle cx="42.3" cy="26.3" r="1.3" fill="#111"/><circle cx="58.0" cy="7.2" r="1.4" fill="#e86a40"/><circle cx="63.8" cy="23.3" r="1.4" fill="#eee"/><circle cx="77.8" cy="22.1" r="0.8" fill="#eee"/><circle cx="77.3" cy="16.8" r="1.2" fill="#ddd"/><circle cx="66.6" cy="10.9" r="1.1" fill="#111"/><circle cx="47.3" cy="13.1" r="0.8" fill="#e86a40"/><circle cx="70.4" cy="9.2" r="1.5" fill="#e86a40"/><circle cx="56.7" cy="19.0" r="1.1" fill="#e86a40"/><circle cx="50.1" cy="6.8" r="1.0" fill="#ddd"/><circle cx="63.1" cy="12.1" r="1.4" fill="#111"/><circle cx="43.9" cy="23.3" r="1.3" fill="#eee"/><circle cx="39.0" cy="24.9" r="1.1" fill="#999"/><circle cx="60.8" cy="25.4" r="0.8" fill="#eee"/><circle cx="59.0" cy="24.8" r="1.3" fill="#f0c020"/><circle cx="47.9" cy="27.8" r="0.7" fill="#e86a40"/><rect x="37" y="19" width="6" height="9" fill="#f0c020"/><rect x="55" y="18" width="6" height="10" fill="#f0c020"/><rect x="45" y="10" width="7" height="10" fill="#e06a40"/><rect x="47" y="4" width="21" height="3.5" fill="#d8a058"/><path d="M27 3 L30 3 L33 26 L29 26Z" fill="#e0b860"/><path d="M24 28 L29 24 L33 24 L36 28Z" fill="#e8c070"/></svg></td><td>20.00 ฿</td><td>2026-03-09 11:36:02</td><td class="ac"><span class="btn g">แก้ไข</span><span class="btn r">ลบ</span></td></tr>
<tr><td>32079</td><td class="th">ชุดนอน</td><td class="im"><svg width="80" height="28" viewBox="0 0 80 28" style="display:block"><rect width="80" height="28" fill="#080808"/><rect x="1.4" y="0" width="2.7" height="28" fill="#bbb" opacity="0.35"/><rect x="2" y="0" width="1.5" height="28" fill="#bbb"/><rect x="7.4" y="0" width="2.7" height="28" fill="#ddd" opacity="0.35"/><rect x="8" y="0" width="1.5" height="28" fill="#ddd"/><rect x="12.4" y="0" width="2.4" height="28" fill="#ccc" opacity="0.35"/><rect x="13" y="0" width="1.2" height="28" fill="#ccc"/><rect x="18.4" y="0" width="2.4" height="28" fill="#ddd" opacity="0.35"/><rect x="19" y="0" width="1.2" height="28" fill="#ddd"/><rect x="25.4" y="0" width="2.4" height="28" fill="#bbb" opacity="0.35"/><rect x="26" y="0" width="1.2" height="28" fill="#bbb"/><rect x="39.4" y="0" width="2.4" height="28" fill="#aaa" opacity="0.35"/><rect x="40" y="0" width="1.2" height="28" fill="#aaa"/><rect x="54.4" y="0" width="2.4" height="28" fill="#ccc" opacity="0.35"/><rect x="55" y="0" width="1.2" height="28" fill="#ccc"/><rect x="62.4" y="0" width="2.4" height="28" fill="#bbb" opacity="0.35"/><rect x="63" y="0" width="1.2" height="28" fill="#bbb"/><rect x="72.4" y="0" width="2.7" height="28" fill="#ccc" opacity="0.35"/><rect x="73" y="0" width="1.5" height="28" fill="#ccc"/><rect x="77.4" y="0" width="2.4" height="28" fill="#bbb" opacity="0.35"/><rect x="78" y="0" width="1.2" height="28" fill="#bbb"/><path d="M10 28 L30 17 L36 16 L40 12 L77 11 L78 28Z" fill="#6fcfb0"/><circle cx="35.2" cy="14.2" r="0.6" fill="#f0e060"/><circle cx="61.6" cy="13.7" r="0.7" fill="#e8a0a0"/><circle cx="54.9" cy="27.8" r="1.1" fill="#e8a0a0"/><circle cx="71.3" cy="24.0" r="0.6" fill="#e06060"/><circle cx="32.6" cy="22.4" r="0.8" fill="#60a0e0"/><circle cx="71.3" cy="15.0" r="0.9" fill="#f0e060"/><circle cx="16.9" cy="13.8" r="0.7" fill="#e8a0a0"/><circle cx="20.8" cy="18.4" r="0.7" fill="#f0e060"/><circle cx="33.3" cy="15.0" r="0.9" fill="#fff"/><circle cx="44.4" cy="15.0" r="0.9" fill="#f0e060"/><circle cx="42.9" cy="14.0" r="1.0" fill="#f0e060"/><circle cx="64.1" cy="19.0" r="1.1" fill="#fff"/><circle cx="17.6" cy="25.3" r="0.9" fill="#fff"/><circle cx="51.0" cy="22.0" r="0.9" fill="#e8a0a0"/><circle cx="29.9" cy="26.6" r="0.5" fill="#e06060"/><circle cx="15.6" cy="15.8" r="0.5" fill="#f0e060"/><circle cx="63.8" cy="13.2" r="0.9" fill="#e8a0a0"/><circle cx="26.6" cy="19.2" r="0.9" fill="#e8a0a0"/><circle cx="46.4" cy="22.6" r="0.6" fill="#e8a0a0"/><circle cx="33.8" cy="17.5" r="1.1" fill="#e06060"/><circle cx="60.4" cy="20.2" r="0.5" fill="#e8a0a0"/><circle cx="68.0" cy="24.2" r="0.5" fill="#60a0e0"/><circle cx="56.0" cy="15.6" r="0.7" fill="#e06060"/><circle cx="55.2" cy="14.8" r="0.9" fill="#fff"/><circle cx="31.0" cy="21.3" r="0.9" fill="#60a0e0"/><circle cx="72.7" cy="27.6" r="0.9" fill="#fff"/><circle cx="75.8" cy="16.3" r="0.5" fill="#e8a0a0"/><circle cx="30.7" cy="16.5" r="1.1" fill="#f0e060"/><circle cx="61.8" cy="17.9" r="0.7" fill="#60a0e0"/><circle cx="29.3" cy="26.6" r="0.8" fill="#e8a0a0"/><circle cx="67.7" cy="23.5" r="0.8" fill="#e06060"/><circle cx="60.4" cy="21.6" r="1.0" fill="#fff"/><circle cx="39.1" cy="21.8" r="1.0" fill="#e8a0a0"/><circle cx="23.3" cy="13.4" r="0.9" fill="#e06060"/><circle cx="24.4" cy="27.7" r="0.5" fill="#e06060"/><circle cx="22.9" cy="22.7" r="0.9" fill="#e06060"/><circle cx="61.2" cy="14.0" r="1.0" fill="#e8a0a0"/><circle cx="26.8" cy="27.3" r="1.0" fill="#e8a0a0"/><circle cx="18.2" cy="26.0" r="0.6" fill="#60a0e0"/><circle cx="27.2" cy="14.7" r="1.1" fill="#e06060"/><circle cx="72.3" cy="24.3" r="1.0" fill="#e06060"/><circle cx="54.4" cy="17.3" r="0.6" fill="#e06060"/><circle cx="64.7" cy="22.7" r="0.7" fill="#fff"/><circle cx="41.1" cy="13.3" r="1.1" fill="#fff"/><circle cx="17.1" cy="24.4" r="1.0" fill="#fff"/><rect x="28" y="19" width="12" height="9" fill="#d8e8e0"/><rect x="50" y="8" width="18" height="3" fill="#e0b868"/><rect x="33" y="0" width="2.5" height="17" fill="#e8c050"/><path d="M23 8 L36 16 L42 21 L40 22 L33 18 L29 21 L27 20 L31 16 L22 9Z" fill="#e0b850"/></svg></td><td>20.00 ฿</td><td>2026-03-09 11:35:46</td><td class="ac"><span class="btn g">แก้ไข</span><span class="btn r">ลบ</span></td></tr>
<tr><td>32078</td><td class="th">ชุดนอน</td><td class="im"><svg width="80" height="28" viewBox="0 0 80 28" style="display:block"><rect width="80" height="28" fill="#eceae4"/><rect x="0" y="17" width="13" height="11" fill="#e0a048"/><rect x="1" y="13" width="7" height="6" fill="#8cc060"/><path d="M30 0 L54 0 L58 12 L28 12Z" fill="#3a2420"/><ellipse cx="41" cy="8" rx="6" ry="8" fill="#e8c0b0"/><ellipse cx="40" cy="6" rx="3" ry="2.5" fill="#e02020"/><path d="M14 28 L20 12 L30 9 L52 10 L62 20 L67 28Z" fill="#f2a8b8"/><path d="M3 9 L10 7 L18 14 L20 20 L12 20Z" fill="#e8b8b0"/><circle cx="46.1" cy="19.6" r="1.0" fill="#e07080"/><circle cx="17.5" cy="18.6" r="1.0" fill="#e07080"/><circle cx="20.9" cy="19.5" r="1.0" fill="#fff"/><circle cx="26.8" cy="25.8" r="1.0" fill="#fff"/><circle cx="30.4" cy="19.0" r="0.7" fill="#f8d0d8"/><circle cx="54.1" cy="27.6" r="0.8" fill="#fff"/><circle cx="20.8" cy="23.1" r="1.3" fill="#fff"/><circle cx="45.6" cy="27.3" r="0.8" fill="#f8d0d8"/><circle cx="63.2" cy="16.5" r="1.3" fill="#fff"/><circle cx="27.6" cy="14.7" r="1.1" fill="#f8d0d8"/><circle cx="40.5" cy="27.9" r="1.2" fill="#f8d0d8"/><circle cx="47.4" cy="17.7" r="1.2" fill="#e07080"/><circle cx="60.6" cy="23.9" r="1.2" fill="#e07080"/><circle cx="17.3" cy="15.3" r="0.9" fill="#e07080"/><circle cx="43.2" cy="14.7" r="0.8" fill="#f8d0d8"/><circle cx="39.0" cy="20.5" r="1.1" fill="#f8d0d8"/><circle cx="48.3" cy="17.6" r="1.0" fill="#e07080"/><circle cx="59.4" cy="19.2" r="1.1" fill="#f8d0d8"/><circle cx="24.5" cy="19.0" r="1.0" fill="#e07080"/><circle cx="22.3" cy="19.4" r="0.8" fill="#f8d0d8"/><circle cx="25.6" cy="16.8" r="1.2" fill="#f8d0d8"/><circle cx="46.9" cy="23.6" r="1.1" fill="#fff"/><circle cx="46.1" cy="17.6" r="0.8" fill="#fff"/><circle cx="25.5" cy="27.6" r="1.3" fill="#f8d0d8"/><circle cx="24.2" cy="22.5" r="0.9" fill="#fff"/><circle cx="65.2" cy="24.7" r="0.8" fill="#f8d0d8"/><circle cx="29.7" cy="13.7" r="0.8" fill="#fff"/><circle cx="60.3" cy="19.4" r="0.9" fill="#fff"/><circle cx="55.6" cy="23.1" r="1.3" fill="#f8d0d8"/><circle cx="30.8" cy="12.4" r="1.0" fill="#e07080"/><circle cx="36.2" cy="23.9" r="1.1" fill="#e07080"/><circle cx="45.4" cy="22.4" r="1.1" fill="#fff"/><circle cx="48.6" cy="26.0" r="1.1" fill="#f8d0d8"/><circle cx="58.6" cy="22.9" r="0.7" fill="#f8d0d8"/><circle cx="37.6" cy="16.2" r="0.7" fill="#f8d0d8"/><rect x="67" y="13" width="13" height="15" fill="#f0ead8"/><rect x="72" y="0" width="8" height="13" fill="#d8d0c8"/></svg></td><td>20.00 ฿</td><td>2026-03-09 11:35:31</td><td class="ac"><span class="btn g">แก้ไข</span><span class="btn r">ลบ</span></td></tr>

</table>
<div class="pg dis" style="left:234px;width:50px">首页</div>
<div class="pg dis" style="left:292px;width:62px">上一页</div>
<div class="pg cur" style="left:362px;width:31px">1</div>
<div class="pg" style="left:403px;width:33px">2</div>
<div class="pg" style="left:446px;width:33px">3</div>
<div class="pg" style="left:489px;width:33px">4</div>
<div class="pg" style="left:532px;width:33px">5</div>
<div class="pg" style="left:575px;width:33px">6</div>
<div class="pg" style="left:618px;width:33px">7</div>
<div class="pg" style="left:661px;width:33px">8</div>
<div class="abs" style="left:704px;top:692px;line-height:32px;font-size:12px;color:#666">...</div>
<div class="pg" style="left:721px;width:54px">3144</div>
<div class="pg" style="left:785px;width:54px">3145</div>
<div class="pg" style="left:849px;width:62px">下一页</div>
<div class="pg" style="left:921px;width:50px">尾页</div>
<div class="abs" id="total" style="left:980px;top:693px;line-height:31px;font-size:12.5px;color:#666;white-space:nowrap">共<b class="bl">3145</b>页 <b class="bl">31442</b>条数据</div>

<svg class="abs" style="left:169px;top:69px" width="16" height="9" viewBox="0 0 16 9"><path d="M1.2 1 L7.5 7.3 L13.8 1" stroke="#e8e8e8" stroke-width="1.6" fill="none"/></svg>
<!-- cart -->
<svg class="abs" style="left:23px;top:112px" width="16" height="13" viewBox="0 0 16 13"><path d="M0.5 1.3 L3.5 1.3 L4.6 8.6 L14 8.6" stroke="#fff" stroke-width="1.4" fill="none"/><path d="M4 2.5 L14.8 2.5 L14.8 7 L4.6 7.8Z" fill="#fff"/><rect x="3.5" y="9.2" width="2.6" height="2.8" fill="#fff"/><rect x="11" y="9.2" width="2.6" height="2.8" fill="#fff"/></svg>
<!-- layers -->
<svg class="abs" style="left:23px;top:155px" width="16" height="15" viewBox="0 0 16 15"><path d="M0.8 6 L7.8 0.8 L14.8 6 L7.8 9Z" fill="#fff"/><path d="M0.8 8 L7.8 11 L14.8 8" stroke="#fff" stroke-width="1.2" fill="none"/><path d="M0.8 10 L7.8 13 L14.8 10" stroke="#fff" stroke-width="1.2" fill="none"/><path d="M0.8 12 L7.8 14.6 L14.8 12" stroke="#fff" stroke-width="1" fill="none"/></svg>
<!-- bell -->
<svg class="abs" style="left:24px;top:200px" width="15" height="16" viewBox="0 0 15 16"><path d="M3 11.2 L3 5.8 A4.3 4.3 0 0 1 11.6 5.8 L11.6 11.2" stroke="#fff" stroke-width="1.3" fill="none"/><rect x="0.5" y="11" width="13.6" height="1.4" fill="#fff"/><path d="M5 12.6 A2.3 2.3 0 0 0 9.6 12.6" stroke="#fff" stroke-width="1.2" fill="none"/><circle cx="7.3" cy="1.2" r="0.8" fill="#fff"/></svg>
<!-- clipboard -->
<svg class="abs" style="left:25px;top:246px" width="13" height="14" viewBox="0 0 13 14"><rect x="0.7" y="1.2" width="11" height="11.9" stroke="#fff" stroke-width="1.2" fill="none"/><path d="M4 2.5 L6.2 0.3 L8.4 2.5Z" fill="#fff"/><rect x="3" y="3.5" width="6.3" height="1.1" fill="#fff"/><rect x="3" y="6" width="6.3" height="1.1" fill="#fff"/><rect x="3" y="8.5" width="4.5" height="1.1" fill="#fff"/></svg>

<!--STAMP-->
<svg class="abs" style="left:0;top:0;pointer-events:none" width="1874" height="895" viewBox="0 0 1874 895">
<circle cx="938" cy="447" r="139.5" stroke="#f00" stroke-width="5.4" fill="none"/>
<g fill="#f00" font-family="Liberation Sans" text-anchor="middle">
<text transform="rotate(259.5 938 447) translate(938 340.5) scale(0.78 1)" font-size="26" font-weight="bold" stroke="#f00" stroke-width="0.9">w</text>
<text transform="rotate(-86.0 938 447) translate(938 340.5) scale(0.78 1)" font-size="26" font-weight="bold" stroke="#f00" stroke-width="0.9">w</text>
<text transform="rotate(-69.5 938 447) translate(938 340.5) scale(0.78 1)" font-size="26" font-weight="bold" stroke="#f00" stroke-width="0.9">w</text>
<text transform="rotate(-55.6 938 447) translate(938 340.5) scale(0.78 1)" font-size="26" font-weight="bold" stroke="#f00" stroke-width="0.9">.</text>
<text transform="rotate(-37.8 938 447) translate(938 340.5) scale(0.78 1)" font-size="26" font-weight="normal">5</text>
<text transform="rotate(-22.4 938 447) translate(938 340.5) scale(0.78 1)" font-size="26" font-weight="normal">1</text>
<text transform="rotate(-5.7 938 447) translate(938 340.5) scale(0.78 1)" font-size="26" font-weight="normal">5</text>
<text transform="rotate(10.3 938 447) translate(938 340.5) scale(0.78 1)" font-size="26" font-weight="bold" stroke="#f00" stroke-width="0.9">y</text>
<text transform="rotate(26.3 938 447) translate(938 340.5) scale(0.78 1)" font-size="26" font-weight="bold" stroke="#f00" stroke-width="0.9">m</text>
<text transform="rotate(40.7 938 447) translate(938 340.5) scale(0.78 1)" font-size="26" font-weight="bold" stroke="#f00" stroke-width="0.9">.</text>
<text transform="rotate(58.5 938 447) translate(938 340.5) scale(0.78 1)" font-size="26" font-weight="bold" stroke="#f00" stroke-width="0.9">c</text>
<text transform="rotate(75.0 938 447) translate(938 340.5) scale(0.78 1)" font-size="26" font-weight="bold" stroke="#f00" stroke-width="0.9">o</text>
<text transform="rotate(91.0 938 447) translate(938 340.5) scale(0.78 1)" font-size="26" font-weight="bold" stroke="#f00" stroke-width="0.9">m</text>
<text transform="rotate(27.7 938 447) translate(938 577.5) skewX(-10)" font-size="14">5</text>
<text transform="rotate(20.5 938 447) translate(938 577.5) skewX(-10)" font-size="14">1</text>
<text transform="rotate(14.3 938 447) translate(938 577.5) skewX(-10)" font-size="14">5</text>
<text transform="rotate(7.6 938 447) translate(938 577.5) skewX(-10)" font-size="14">y</text>
<text transform="rotate(1.1 938 447) translate(938 577.5) skewX(-10)" font-size="14">m</text>
<text transform="rotate(-4.8 938 447) translate(938 577.5) skewX(-10)" font-size="14">.</text>
<text transform="rotate(-12.1 938 447) translate(938 577.5) skewX(-10)" font-size="14">c</text>
<text transform="rotate(-18.5 938 447) translate(938 577.5) skewX(-10)" font-size="14">o</text>
<text transform="rotate(-25.2 938 447) translate(938 577.5) skewX(-10)" font-size="14">m</text>
<text x="864" y="461" font-size="38.5" text-anchor="start" letter-spacing="0.5" stroke="#f00" stroke-width="0.7">515</text><text x="931" y="461" font-size="38" text-anchor="start" stroke="#f00" stroke-width="1">源</text><text x="972" y="461" font-size="38" text-anchor="start" stroke="#f00" stroke-width="1">码</text>
<text x="940" y="527" font-size="26.5" font-weight="bold" text-anchor="middle" letter-spacing="1.3">515ym.com</text>
</g></svg>
<!--/STAMP-->
</body></html>
